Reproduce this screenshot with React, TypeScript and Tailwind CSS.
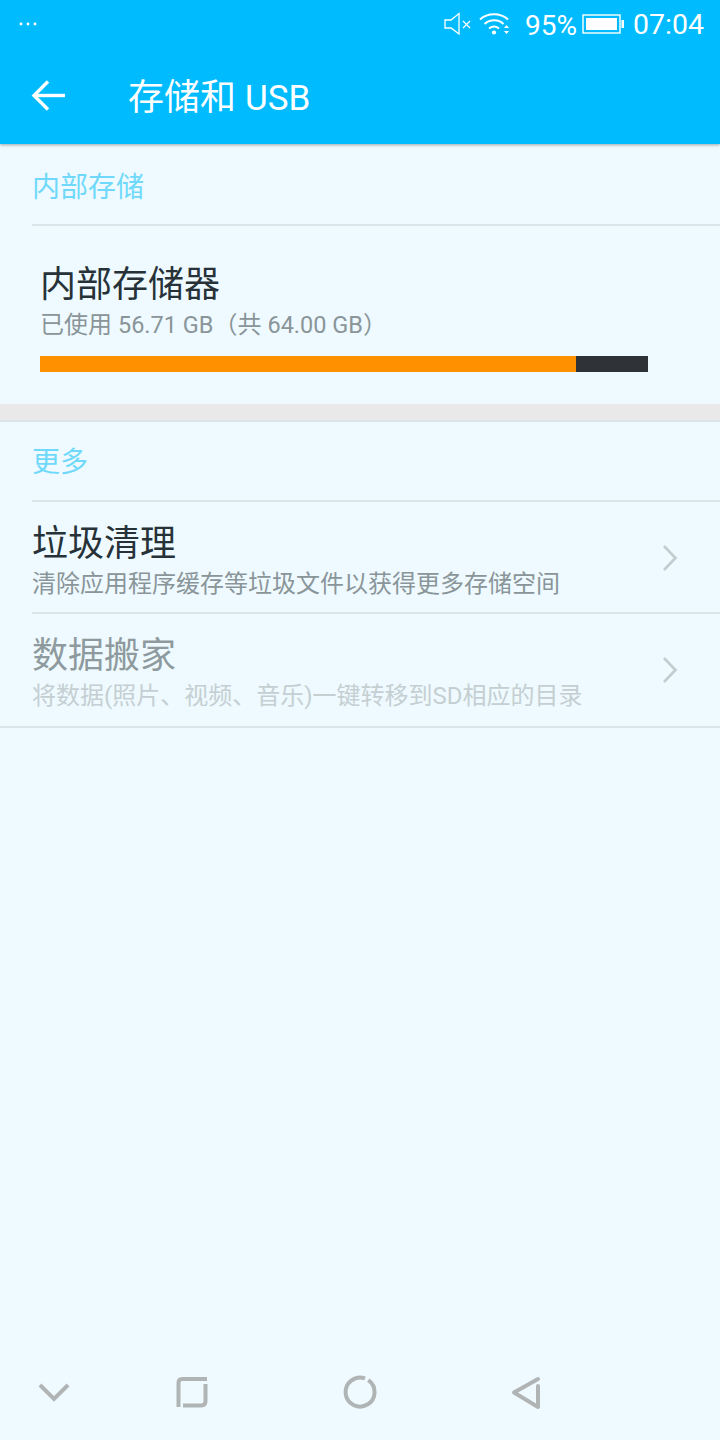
import React from "react";

const font = "font-['Roboto','Noto_Sans_CJK_SC',sans-serif]";

function Chevron() {
  return (
    <svg width="20" height="30" viewBox="0 0 20 30" className="shrink-0 mt-[2px]" fill="none" stroke="#c3cdd0" strokeWidth="2.6">
      <path d="M4 3 L15.5 15 L4 27" />
    </svg>
  );
}

function SectionTitle({ children, first }: { children: React.ReactNode; first?: boolean }) {
  return (
    <div className="pl-8">
      <div className={`flex items-center text-[28px] leading-none text-[#70d9fb] ${first ? "h-[80px] pt-[8px]" : "h-[78px] pt-[4px]"}`}>{children}</div>
      <div className="h-[2px] bg-[#d9e5e8]" />
    </div>
  );
}

function Row({ title, sub, muted, last }: { title: string; sub: string; muted?: boolean; last?: boolean }) {
  return (
    <div className={last ? "" : "pl-8"}>
      <div className={`flex items-center justify-between pr-[40px] ${last ? "h-[112px] pl-8 pb-[2px]" : "h-[110px]"}`}>
        <div className="flex flex-col pt-[9px]">
          <div className={`text-[36px] leading-[45px] ${muted ? "text-[#8f9a9e]" : "text-[#263238]"}`}>{title}</div>
          <div className={`text-[24px] leading-[35px] ${muted ? "text-[#c5cfd2]" : "text-[#8a9599]"}`}>{sub}</div>
        </div>
        <Chevron />
      </div>
      <div className="h-[2px] bg-[#d9e5e8]" />
    </div>
  );
}

export default function App() {
  return (
    <div className={`${font} relative w-[720px] h-[1440px] bg-[#eefaff] flex flex-col overflow-hidden`}>
      <header className="h-[144px] shrink-0 bg-[#00bcff] shadow-[0_1px_3px_rgba(0,0,0,0.35)] flex flex-col text-white">
        <div className="h-[48px] flex items-center justify-between pl-[19px] pr-[16px]">
          <svg width="18" height="4" viewBox="0 0 18 4" fill="#fff">
            <circle cx="2" cy="2" r="1.4" />
            <circle cx="9" cy="2" r="1.4" />
            <circle cx="16" cy="2" r="1.4" />
          </svg>
          <div className="flex items-center">
            <svg width="28" height="24" viewBox="0 0 28 24" fill="none" stroke="#fff" strokeWidth="1.3">
              <path d="M1 8 H7 L15 1.5 V22 L7 16 H1 Z" />
              <path d="M19 10 L26 17 M26 10 L19 17" strokeWidth="1.2" transform="translate(0 -1)" />
            </svg>
            <svg width="32" height="24" viewBox="0 0 32 24" fill="none" stroke="#fff" strokeWidth="2" className="ml-[7px]">
              <path d="M1 7.5 C8.5 0.5 21.5 0.5 29 7.5" />
              <path d="M5.5 12 C11 7 19.5 7 24.5 12" />
              <path d="M10 16.5 C13 14 17 14 20 16.5" />
              <circle cx="15" cy="20.5" r="2.1" fill="#fff" stroke="none" />
              <path d="M25 16 l2.5 -3 l2.5 3 Z M25 19 l2.5 3 l2.5 -3 Z" fill="#fff" stroke="none" />
            </svg>
            <span className="ml-[14px] text-[28px] leading-none pt-[3px]">95%</span>
            <svg width="43" height="20" viewBox="0 0 43 20" fill="none" className="ml-[5px]">
              <rect x="1" y="1" width="37" height="18" stroke="#fff" strokeWidth="1.4" />
              <rect x="4" y="4" width="31" height="12" fill="#fff" />
              <rect x="39.5" y="6" width="2.5" height="8" fill="#fff" />
            </svg>
            <span className="ml-[8px] text-[28.5px] leading-none pt-[3px]">07:04</span>
          </div>
        </div>
        <div className="h-[96px] flex items-center">
          <svg width="36" height="32" viewBox="0 0 36 32" fill="none" stroke="#fff" strokeWidth="3.4" className="ml-[31px]">
            <path d="M34 15.5 H3" />
            <path d="M17 1.5 L3 15.5 L17 29.5" />
          </svg>
          <span className="ml-[61px] text-[36px] leading-none pt-[4px]">
            存储和 <span className="text-[35px]">USB</span>
          </span>
        </div>
      </header>

      <SectionTitle first>内部存储</SectionTitle>

      <div className="h-[178px] pl-[40px] pt-[37px]">
        <div className="text-[36px] leading-[44px] text-[#263238]">内部存储器</div>
        <div className="text-[24px] leading-[36px] text-[#8a9599]">
          已使用 <span className="text-[23.5px]">56.71 GB</span>（共 <span className="text-[23.5px]">64.00 GB</span>）
        </div>
        <div className="mt-[13px] w-[608px] h-[16px] flex bg-[#2f3338]">
          <div className="w-[536px] h-full bg-[#ff9100]" />
        </div>
      </div>

      <div className="h-[16px] bg-[#e9e9e9]" />
      <div className="h-[2px] bg-[#d9e5e8]" />

      <SectionTitle>更多</SectionTitle>

      <Row title="垃圾清理" sub="清除应用程序缓存等垃圾文件以获得更多存储空间" />
      <Row title="数据搬家" sub="将数据(照片、视频、音乐)一键转移到SD相应的目录" muted last />

      <div className="absolute left-0 right-0 bottom-0 h-[96px] flex items-center">
        <svg width="560" height="60" viewBox="0 0 560 60" fill="none" stroke="#b1b4b5" strokeWidth="4">
          <path d="M40 23 L54 37 L68 23" />
          <path d="M207 17 H182 Q178.5 17 178.5 21 V45" />
          <path d="M183 43.5 H201 Q205.5 43.5 205.5 39 V22" />
          <path d="M365 16.4 A14.5 14.5 0 1 0 368.3 18.1" />
          <path d="M538 17 L514 30.5 L538 45 V24" strokeLinejoin="round" strokeLinecap="round" />
        </svg>
      </div>
    </div>
  );
}
